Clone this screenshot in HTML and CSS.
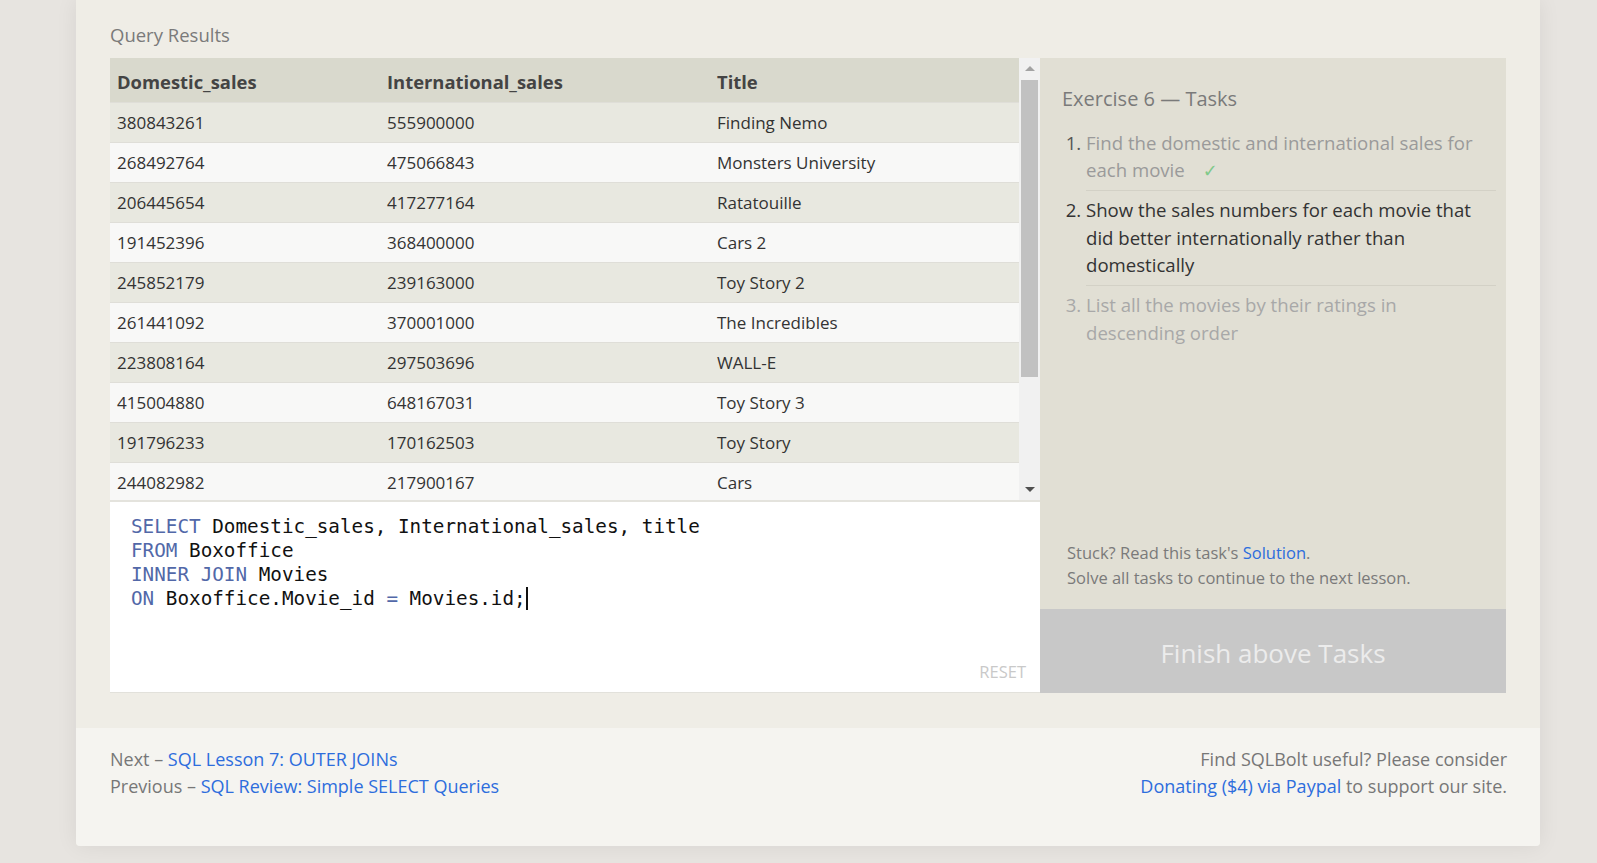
FILE: index.html
```html
<!DOCTYPE html>
<html lang="en">
<head>
<meta charset="utf-8">
<title>SQLBolt - Exercise 6</title>
<link rel="stylesheet" href="styles.css">
</head>
<body>
<div class="page">
  <div class="lesson">
    <div class="results-label">Query Results</div>
    <div class="workspace">
      <div class="left">
        <div class="results">
          <div class="table-viewport">
            <table class="results-table">
              <thead>
                <tr><th class="c1">Domestic_sales</th><th class="c2">International_sales</th><th class="c3">Title</th></tr>
              </thead>
              <tbody>
                <tr><td>380843261</td><td>555900000</td><td>Finding Nemo</td></tr>
                <tr><td>268492764</td><td>475066843</td><td>Monsters University</td></tr>
                <tr><td>206445654</td><td>417277164</td><td>Ratatouille</td></tr>
                <tr><td>191452396</td><td>368400000</td><td>Cars 2</td></tr>
                <tr><td>245852179</td><td>239163000</td><td>Toy Story 2</td></tr>
                <tr><td>261441092</td><td>370001000</td><td>The Incredibles</td></tr>
                <tr><td>223808164</td><td>297503696</td><td>WALL-E</td></tr>
                <tr><td>415004880</td><td>648167031</td><td>Toy Story 3</td></tr>
                <tr><td>191796233</td><td>170162503</td><td>Toy Story</td></tr>
                <tr><td>244082982</td><td>217900167</td><td>Cars</td></tr>
              </tbody>
            </table>
          </div>
          <div class="scrollbar">
            <div class="sb-button"><span class="arrow-up"></span></div>
            <div class="sb-track"><div class="sb-thumb"></div></div>
            <div class="sb-button"><span class="arrow-down"></span></div>
          </div>
        </div>
        <div class="editor">
<pre class="code"><span class="kw">SELECT</span> Domestic_sales, International_sales, title
<span class="kw">FROM</span> Boxoffice
<span class="kw">INNER JOIN</span> Movies
<span class="kw">ON</span> Boxoffice.Movie_id <span class="op">=</span> Movies.id;<span class="cursor"></span></pre>
          <div class="reset">RESET</div>
        </div>
      </div>
      <div class="tasks">
        <div class="tasks-title">Exercise 6 — Tasks</div>
        <ol class="task-list">
          <li class="done"><span class="task-text">Find the domestic and international sales for each movie</span><span class="check">✓</span></li>
          <li class="current"><span class="task-text">Show the sales numbers for each movie that did better internationally rather than domestically</span></li>
          <li class="todo"><span class="task-text">List all the movies by their ratings in descending order</span></li>
        </ol>
        <div class="tasks-spacer"></div>
        <div class="stuck">
          <div>Stuck? Read this task's <a href="#">Solution</a>.</div>
          <div>Solve all tasks to continue to the next lesson.</div>
        </div>
        <div class="finish">Finish above Tasks</div>
      </div>
    </div>
  </div>
  <div class="footer">
    <div class="footer-nav">
      <div>Next – <a href="#">SQL Lesson 7: OUTER JOINs</a></div>
      <div>Previous – <a href="#">SQL Review: Simple SELECT Queries</a></div>
    </div>
    <div class="footer-donate">
      <div>Find SQLBolt useful? Please consider</div>
      <div><a href="#">Donating ($4) via Paypal</a> to support our site.</div>
    </div>
  </div>
</div>
</body>
</html>
```

FILE: styles.css
```css
html, body {
  margin: 0;
  padding: 0;
  background: #e7e4e0;
  height: 100%;
  overflow: hidden;
}

body {
  font-family: "Open Sans", "Noto Sans", sans-serif;
  color: #333;
}

a {
  color: #2d6ddd;
  text-decoration: none;
}

.page {
  margin-left: 76px;
  width: 1464px;
  background: #efede6;
  border-radius: 0 0 4px 4px;
  box-shadow: 0 0 22px rgba(0, 0, 0, 0.07);
  overflow: hidden;
}

.lesson {
  padding: 23px 34px 35px 34px;
}

.results-label {
  font-size: 18.5px;
  line-height: 24px;
  color: #7a7a7a;
  margin-bottom: 11px;
}

.workspace {
  display: flex;
  height: 635px;
}

.left {
  width: 930px;
  display: flex;
  flex-direction: column;
}

.results {
  display: flex;
  height: 442px;
}

.table-viewport {
  flex: 1;
  overflow: hidden;
  background: #f8f8f7;
}

.results-table {
  width: 100%;
  border-collapse: collapse;
  font-size: 17px;
  color: #333;
}

.results-table th {
  background: #d9d9cd;
  height: 42px;
  text-align: left;
  font-size: 18.4px;
  font-weight: 700;
  color: #444;
  padding: 2px 7px 0 7px;
}

.results-table .c1 { width: 256px; }
.results-table .c2 { width: 316px; }

.results-table td {
  height: 39px;
  padding: 0 7px;
  border-top: 1px solid #dfded8;
}

.results-table tbody tr:nth-child(odd) td {
  background: #e8e8e0;
}

.results-table tbody tr:nth-child(even) td {
  background: #f8f8f7;
}

.scrollbar {
  width: 21px;
  background: #f1f1f1;
  display: flex;
  flex-direction: column;
}

.sb-button {
  height: 21px;
  display: flex;
  align-items: center;
  justify-content: center;
}

.arrow-up {
  width: 0;
  height: 0;
  border-left: 5px solid transparent;
  border-right: 5px solid transparent;
  border-bottom: 5px solid #a3a3a3;
}

.arrow-down {
  width: 0;
  height: 0;
  border-left: 5px solid transparent;
  border-right: 5px solid transparent;
  border-top: 5px solid #505050;
}

.sb-track {
  flex: 1;
  padding: 1px 2px 0 2px;
}

.sb-thumb {
  height: 297px;
  background: #c1c1c1;
}

.editor {
  flex: 1;
  background: #fff;
  border-top: 2px solid #e4e3dd;
  border-bottom: 1px solid #e2e1db;
  display: flex;
  flex-direction: column;
}

.code {
  margin: 0;
  padding: 13px 21px 0 21px;
  font-family: "DejaVu Sans Mono", "Liberation Mono", monospace;
  font-size: 19.3px;
  line-height: 24px;
  color: #111;
  flex: 1;
}

.code .kw,
.code .op {
  color: #5268a8;
}

.cursor {
  display: inline-block;
  width: 2px;
  height: 23px;
  background: #111;
  vertical-align: -5px;
}

.reset {
  align-self: flex-end;
  font-size: 16.5px;
  line-height: 22px;
  color: #c9c9c9;
  padding: 0 14px 9px 0;
}

.tasks {
  width: 466px;
  background: #e1dfd4;
  display: flex;
  flex-direction: column;
}

.tasks-title {
  font-size: 20px;
  line-height: 30px;
  color: #7a7a7a;
  padding: 26px 10px 0 22px;
}

.task-list {
  margin: 9px 10px 0 22px;
  padding: 0 0 0 24px;
  font-size: 18.6px;
  line-height: 27.6px;
}

.task-list li {
  padding: 5.5px 0 6px 0;
  border-bottom: 1px solid #d3d1c6;
}

.task-list li:last-child {
  border-bottom: none;
}

.task-list li.done {
  color: #9a9a9a;
}

.task-list li.done::marker {
  color: #555;
}

.task-list li.current {
  color: #333;
}

.task-list li.todo {
  color: #a8a8a8;
}

.check {
  display: inline-block;
  font-family: "DejaVu Sans", sans-serif;
  font-size: 18px;
  line-height: 20px;
  color: #80c98a;
  margin-left: 18px;
}

.tasks-spacer {
  flex: 1;
}

.stuck {
  padding: 0 10px 19px 27px;
  font-size: 16.5px;
  line-height: 24.5px;
  color: #7a7a7a;
}

.finish {
  height: 84px;
  box-sizing: border-box;
  padding-top: 3px;
  background: #c8c8c8;
  color: #ececec;
  font-size: 26px;
  display: flex;
  align-items: center;
  justify-content: center;
}

.footer {
  background: #f5f4f0;
  height: 118px;
  box-sizing: border-box;
  padding: 18px 33px 0 34px;
  display: flex;
  justify-content: space-between;
  font-size: 18px;
  line-height: 27px;
  color: #777;
}

.footer-donate {
  text-align: right;
}
```
